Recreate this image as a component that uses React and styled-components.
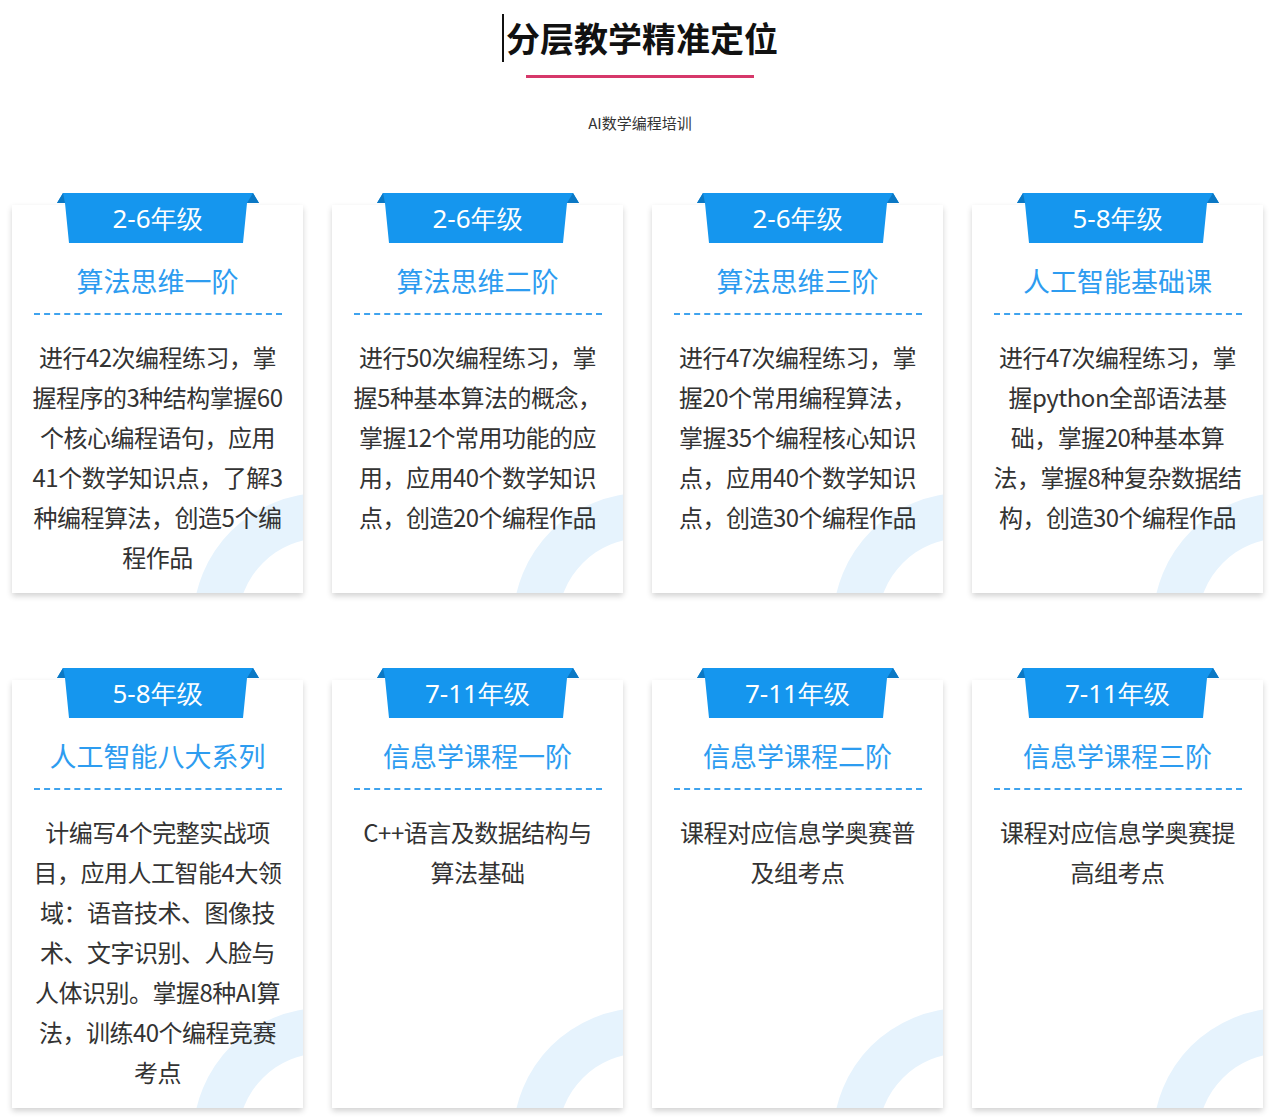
import React from "react";
import styled, { createGlobalStyle } from "styled-components";

const G = createGlobalStyle`
  body { margin: 0; background: #fff; font-family: "Noto Sans CJK SC", "Noto Sans", sans-serif; }
`;
const Page = styled.div`width:1280px;height:1119px;overflow:hidden;`;
const Header = styled.header`display:flex;flex-direction:column;align-items:center;padding-top:14px;`;
const Title = styled.h1`margin:0;font-size:34px;line-height:48px;font-weight:700;color:#111;border-left:2px solid #111;padding-left:2px;`;
const Rule = styled.div`width:228px;height:3px;background:#d6386a;margin-top:13px;`;
const Sub = styled.p`margin:34px 0 0;font-size:15px;color:#333;`;
const Grid = styled.div`display:grid;grid-template-columns:repeat(4,291px);column-gap:29px;row-gap:75px;padding:60px 0 0 12px;`;
const Card = styled.div`position:relative;height:${p=>p.h}px;margin-top:12px;background:#fff;box-shadow:0 3px 6px rgba(0,0,0,.18);display:flex;flex-direction:column;align-items:center;overflow:hidden;`;
const Wrap = styled.div`position:relative;`;
const Tab = styled.div`position:absolute;top:0;left:50%;transform:translateX(-50%);width:202px;height:50px;z-index:2;display:flex;align-items:center;justify-content:center;color:#fff;font-size:26px;font-family:"Noto Sans",sans-serif;
  svg{position:absolute;inset:0;z-index:-1;}`;
const Name = styled.div`margin-top:${p=>p.mt}px;font-size:27px;color:#2d9cf0;line-height:36px;`;
const Dash = styled.div`width:248px;border-top:2px dashed #3fa3ee;margin-top:14px;`;
const Body = styled.div`margin-top:22px;width:250px;text-align:center;font-size:24px;line-height:40px;color:#333;letter-spacing:-0.5px;position:relative;z-index:1;`;
const Deco = styled.svg`position:absolute;right:-20px;bottom:-30px;width:140px;height:160px;`;

const data = [
  ["2-6年级","算法思维一阶","进行42次编程练习，掌握程序的3种结构掌握60个核心编程语句，应用41个数学知识点，了解3种编程算法，创造5个编程作品"],
  ["2-6年级","算法思维二阶","进行50次编程练习，掌握5种基本算法的概念，掌握12个常用功能的应用，应用40个数学知识点，创造20个编程作品"],
  ["2-6年级","算法思维三阶","进行47次编程练习，掌握20个常用编程算法，掌握35个编程核心知识点，应用40个数学知识点，创造30个编程作品"],
  ["5-8年级","人工智能基础课","进行47次编程练习，掌握python全部语法基础，掌握20种基本算法，掌握8种复杂数据结构，创造30个编程作品"],
  ["5-8年级","人工智能八大系列","计编写4个完整实战项目，应用人工智能4大领域：语音技术、图像技术、文字识别、人脸与人体识别。掌握8种AI算法，训练40个编程竞赛考点"],
  ["7-11年级","信息学课程一阶","C++语言及数据结构与算法基础"],
  ["7-11年级","信息学课程二阶","课程对应信息学奥赛普及组考点"],
  ["7-11年级","信息学课程三阶","课程对应信息学奥赛提高组考点"],
];

export default function App(){
  return <Page><G/>
    <Header><Title>分层教学精准定位</Title><Rule/><Sub>AI数学编程培训</Sub></Header>
    <Grid>
      {data.map(([g,n,b],i)=>(
        <Wrap key={i}>
          <Tab>
            <svg width="202" height="50" viewBox="0 0 202 50">
              <polygon points="6,0 196,0 202,10 190,10 186,50 12,50 8,10 0,10" fill="#1596ee"/>
              <polygon points="6,0 0,10 8,10" fill="#0b78c4"/>
              <polygon points="196,0 202,10 190,10" fill="#0b78c4"/>
            </svg>
            {g}
          </Tab>
          <Card h={i<4?388:428}>
            <Name mt={58}>{n}</Name>
            <Dash/>
            <Body>{b}</Body>
            <Deco viewBox="0 0 140 160"><path d="M10 160 A 130 130 0 0 1 140 30 L140 75 A 85 85 0 0 0 55 160 Z" fill="#e6f3fd"/></Deco>
          </Card>
        </Wrap>
      ))}
    </Grid>
  </Page>;
}
